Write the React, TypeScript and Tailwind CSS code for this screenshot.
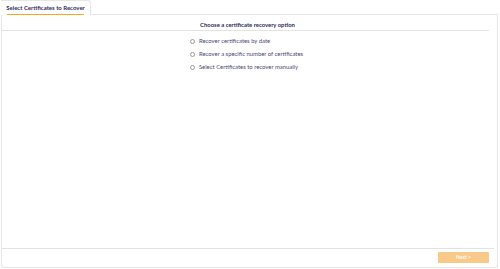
import React, { useState } from 'react'

const OPTIONS = [
  'Recover certificates by date',
  'Recover a specific number of certificates',
  'Select Certificates to recover manually',
]

export default function App() {
  const [selected, setSelected] = useState<number | null>(null)

  return (
    <div
      className="flex h-[269px] w-[500px] flex-col bg-white pr-[2px] pl-[1px] pb-[1px]"
      style={{ fontFamily: "Lato, 'Open Sans', sans-serif" }}
    >
      {/* Tab strip */}
      <div className="flex h-[15px] shrink-0">
        <div className="flex h-[15px] w-[90px] flex-col items-center rounded-tr-[3px] border-t border-r border-[#e6e6e6] bg-white pt-[3px]">
          <span className="text-[6px] leading-[8px] font-bold text-[#2e2c5f]">Select Certificates to Recover</span>
          <div className="mt-[2px] h-[2px] w-[77px] bg-[#f5a623]" />
        </div>
        <div className="flex-1 border-b border-[#e6e6e6]" />
      </div>

      {/* Panel */}
      <div className="flex flex-1 flex-col rounded-b-[3px] border-x border-b border-[#e6e6e6]">
        <div className="flex flex-1 flex-col">
          <div className="mr-[8px] flex h-[16px] items-end justify-center border-b border-[#e3e3e3] pb-[1px] pl-[4px]">
            <span className="text-[5.9px] leading-[8px] font-bold text-[#2e2c5f]">
              Choose a certificate recovery option
            </span>
          </div>
          <div className="flex flex-col items-center pt-[6px]">
            <div className="flex flex-col gap-[4.3px] pr-[6px]">
              {OPTIONS.map((o, i) => (
                <label key={o} className="flex h-[8.7px] cursor-pointer items-center gap-[4px]" onClick={() => setSelected(i)}>
                  <span className="flex h-[5px] w-[5px] items-center justify-center rounded-full border-[0.8px] border-[#9a9a9a]">
                    {selected === i && <span className="h-[2px] w-[2px] rounded-full bg-[#f5a623]" />}
                  </span>
                  <span className="text-[5.9px] leading-[8px] font-normal text-[#4b4878]">{o}</span>
                </label>
              ))}
            </div>
          </div>
        </div>

        {/* Footer */}
        <div className="mr-[3px] flex h-[19px] items-start justify-end border-t border-[#e3e3e3] pt-[3px] pr-[5px]">
          <button className="flex h-[11px] w-[51px] items-center justify-center rounded-[1px] bg-[#f9c98a] text-[5px] leading-none font-semibold text-white">
            Next &gt;
          </button>
        </div>
      </div>
    </div>
  )
}
